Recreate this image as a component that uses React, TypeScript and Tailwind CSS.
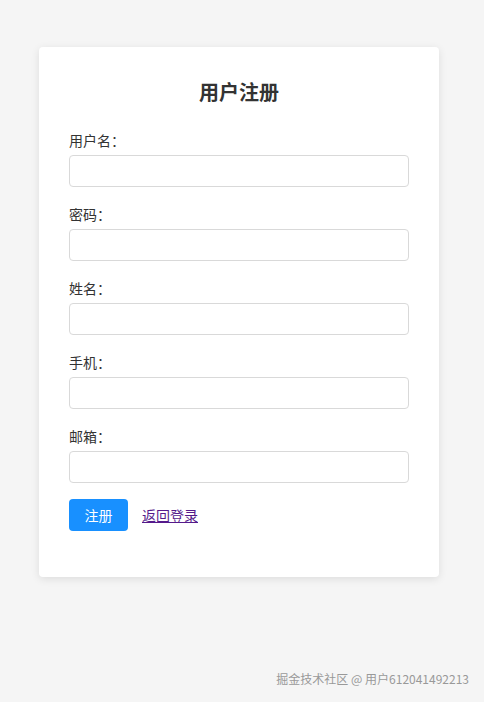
import React from 'react';

const fields = ['用户名', '密码', '姓名', '手机', '邮箱'];

const App: React.FC = () => {
  return (
    <div
      className="relative min-h-[702px] w-full bg-[#f5f5f5] pt-[47px] text-[#333]"
      style={{ fontFamily: '"Noto Sans CJK SC", "Noto Sans", sans-serif' }}
    >
      <div className="ml-[39px] w-[400px] rounded-[4px] bg-white px-[30px] pt-[30px] pb-[46px] shadow-[0_2px_8px_rgba(0,0,0,0.1)]">
        {/* Title */}
        <h2 className="mb-[22px] text-center text-[20px] font-bold leading-[30px] text-[#333]">用户注册</h2>

        {/* Form fields */}
        {fields.map((label) => (
          <div key={label} className="mb-4">
            <label className="mb-[4px] block text-[14px] leading-[22px]">{label}：</label>
            <input
              type={label === '密码' ? 'password' : 'text'}
              className="block h-[32px] w-full rounded-[4px] border border-[#d9d9d9] bg-white px-2 text-[14px] outline-none"
            />
          </div>
        ))}

        {/* Actions */}
        <div className="flex items-center gap-[14px]">
          <button className="h-[32px] w-[59px] rounded-[4px] bg-[#1890ff] text-[14px] text-white">注册</button>
          <a href="#" className="text-[14px] text-[#551a8b] underline">返回登录</a>
        </div>
      </div>

      {/* Watermark */}
      <div className="absolute right-[15px] bottom-[14px] text-[12px] text-[#999]">掘金技术社区 @ 用户612041492213</div>
    </div>
  );
};

export default App;
